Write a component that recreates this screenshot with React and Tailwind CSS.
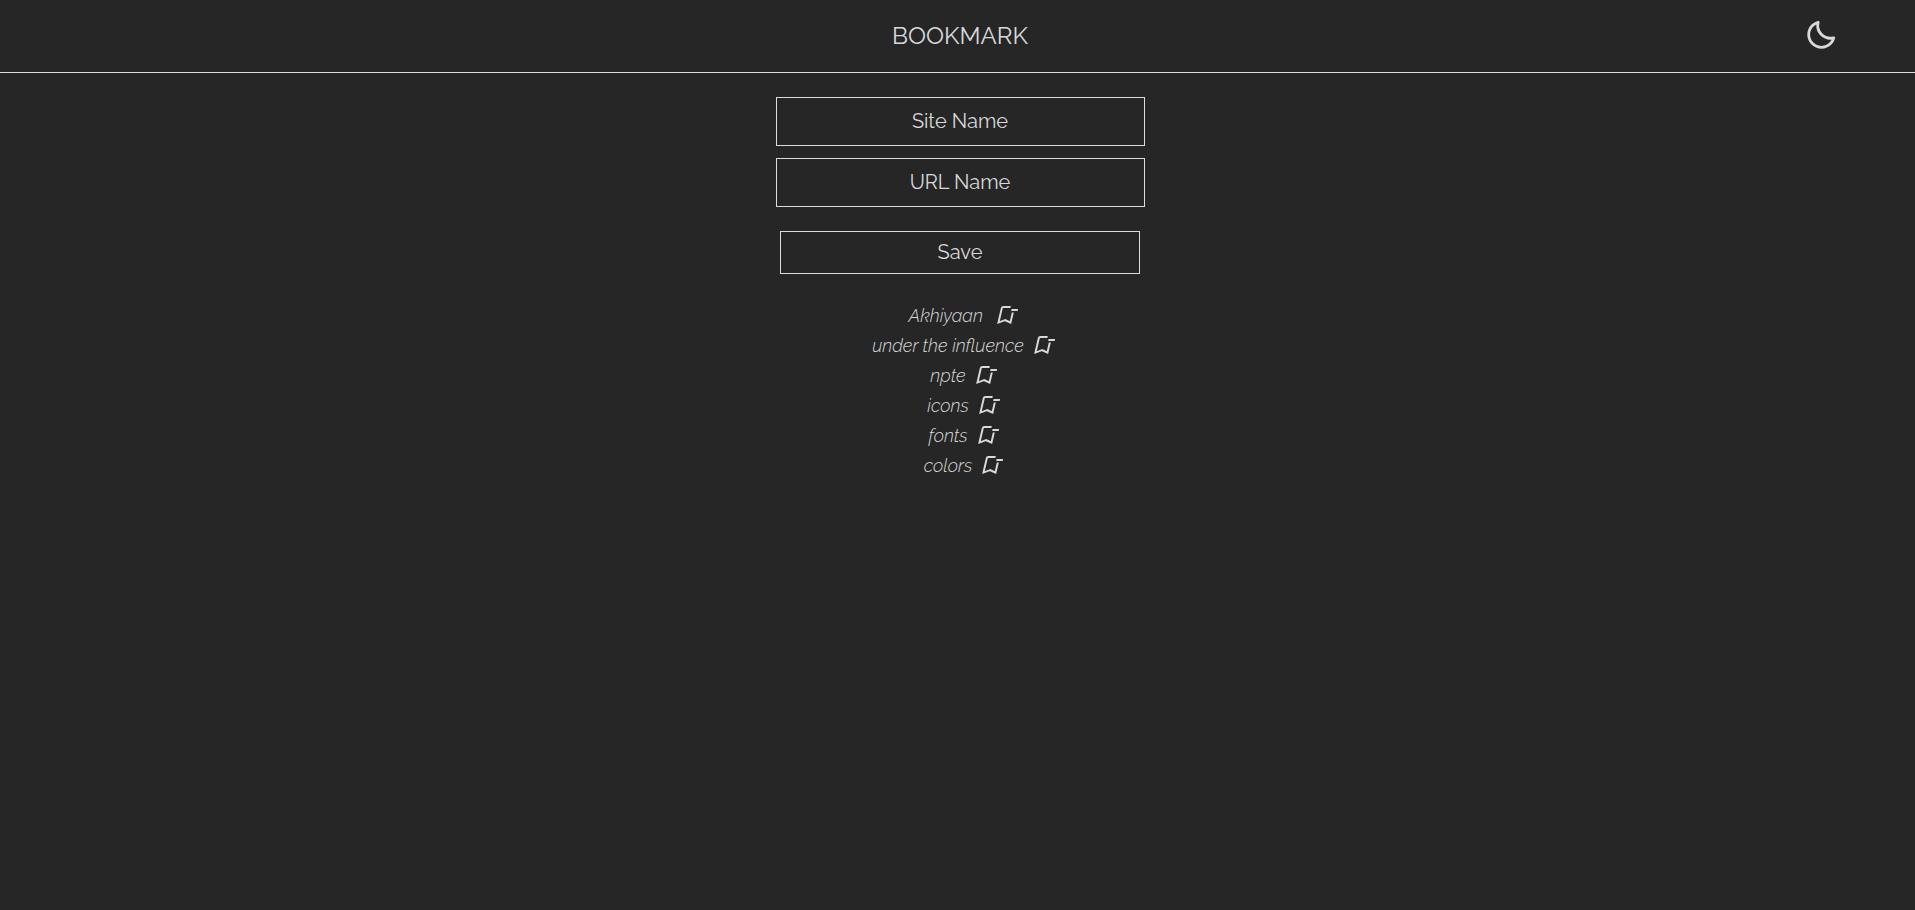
import { useState } from "react";
import { BiMoon } from "react-icons/bi";

const initial = ["Akhiyaan ", "under the influence", "npte", "icons", "fonts", "colors"];

const fieldClass =
  "h-[49px] w-[369px] border border-[#dcdcdc] bg-transparent pb-0.5 text-center text-xl text-[#d9d9d9] outline-none placeholder:text-[#d9d9d9] placeholder:opacity-100";

function RemoveIcon() {
  return (
    <svg width="24" height="24" viewBox="0 0 24 24" fill="none" stroke="currentColor" strokeWidth="2" className="overflow-visible" aria-hidden="true">
      <g transform="translate(2 -1) skewX(-13)">
        <path d="M18 9.5V19.6L12 17L6 19.6V5a1 1 0 0 1 1-1h7.5M16 7h6.5" />
      </g>
    </svg>
  );
}

export default function App() {
  const [bookmarks, setBookmarks] = useState(initial);
  const [name, setName] = useState("");
  const [url, setUrl] = useState("");

  const save = (event) => {
    event.preventDefault();
    if (name) setBookmarks([...bookmarks, name]);
    setName("");
    setUrl("");
  };

  const remove = (label) => setBookmarks(bookmarks.filter((item) => item !== label));

  return (
    <div className="min-h-screen bg-[#262626] font-['Raleway','Lato',sans-serif] text-[#d9d9d9]">
      <header className="grid h-[73px] grid-cols-[1fr_auto_1fr] items-center border-b border-[#dcdcdc] pl-[5px]">
        <h1 className="col-start-2 text-2xl">BOOKMARK</h1>
        <button type="button" aria-label="Toggle dark mode" className="mr-[77px] justify-self-end pb-0.5">
          <BiMoon size={34} />
        </button>
      </header>
      <main className="flex flex-col items-center pt-6 pl-[5px]">
        <form onSubmit={save} className="flex flex-col items-center gap-3">
          <input aria-label="Site Name" placeholder="Site Name" value={name} onChange={(e) => setName(e.target.value)} className={fieldClass} />
          <input aria-label="URL Name" placeholder="URL Name" value={url} onChange={(e) => setUrl(e.target.value)} className={fieldClass} />
          <button type="submit" className="mt-3 h-[43px] w-[360px] border border-[#dcdcdc] pb-0.5 text-xl">Save</button>
        </form>
        <ul className="mt-[27px] flex flex-col items-center pl-2 text-lg font-light italic">
          {bookmarks.map((label) => (
            <li key={label} className="flex h-[30px] items-center gap-2">
              <a href="#" className="whitespace-pre">{label}</a>
              <button type="button" aria-label={"Remove " + label.trim()} onClick={() => remove(label)}>
                <RemoveIcon />
              </button>
            </li>
          ))}
        </ul>
      </main>
    </div>
  );
}
